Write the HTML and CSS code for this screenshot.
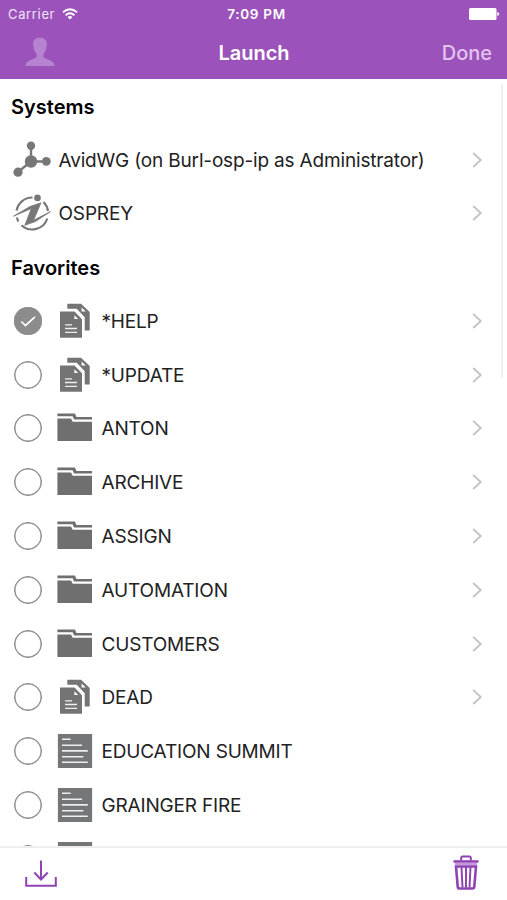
FILE: index.html
```
<!DOCTYPE html>
<html lang="en">
<head>
<meta charset="utf-8">
<title>Launch</title>
<link rel="stylesheet" href="styles.css">
</head>
<body>
<svg class="sprite" aria-hidden="true">
  <symbol id="chevron" viewBox="0 0 12 18"><path d="M1.200 2 8.800 9l-7.600 7" fill="none" stroke="#c3c3c6" stroke-width="1.800"/></symbol>
  <symbol id="docs" viewBox="0 0 36 36">
    <path fill="#747474" d="M10.300.7H24l8.700 8.300v18.400h-5V14.300L19.700 5.700h-9.400z"/>
    <path fill="#747474" d="M3 8.400h14.500L25 16.300v18.500H3z"/>
    <path fill="#fff" d="M24.600 4.400v4h4.200zM17.400 12.300v3.700h3.800z"/>
    <path stroke="#eee" stroke-width="1.300" d="M8 21.900h7M8 25.500h12M8 29.400h12"/>
  </symbol>
  <symbol id="folder" viewBox="0 0 36 36">
    <path fill="#6f6f6f" d="M.4 3.500H18l1.400 3.600H35v2.500H17l-1.400-3.300H.4zM.4 8.500H14l1.700 3.300H35v19.200H.4z"/>
  </symbol>
  <symbol id="note" viewBox="0 0 36 36">
    <path fill="#747678" d="M.9.900h34.200v34.200H.9z"/>
    <path stroke="#eee" stroke-width="1.600" d="M5 6.300h8.700M5 12.200h20M5 17.900h25.800M5 23.700h21.400M5 29.300h25.800"/>
  </symbol>
</svg>
<div class="app">
  <header class="top">
    <div class="status">
      <span class="carrier">Carrier</span>
      <svg class="wifi" viewBox="0 0 16 12"><path d="M1 4.300Q8-1.800 15 4.300M3.600 7.200Q8 3.400 12.400 7.200" fill="none" stroke="#fff" stroke-width="1.800"/><path d="M5.500 9Q8 7 10.500 9L8 11.600z" fill="#fff"/></svg>
      <span class="clock">7:09 PM</span>
      <svg class="battery" viewBox="0 0 31 12"><rect width="27.500" height="12" rx="1.500" fill="#fff"/><path d="M28.300 4q2 .5 2 2t-2 2z" fill="#fff"/></svg>
    </div>
    <nav class="bar">
      <svg class="person" viewBox="0 0 30 30"><path fill="#b783d0" d="M15 .8c4.500 0 7 2.500 6.900 6.500-.1 4-1.300 7-3.500 9.300v3.200c1.200 3.200 11.200 2.500 11.200 9.200H.4c0-6.700 10-6 11.200-9.200v-3.200C9.400 14.300 8.200 11.300 8.100 7.300 8 3.300 10.500.8 15 .8z"/></svg>
      <h1 class="title">Launch</h1>
      <span class="done">Done</span>
    </nav>
  </header>
  <main class="list">
    <h2 class="section">Systems</h2>
    <div class="row system">
      <svg class="sys" viewBox="0 0 38 38"><path d="M18 5v15.500H34M18 20.500 5 31" fill="none" stroke="#777" stroke-width="2.400"/><g fill="#777"><circle cx="18" cy="20.500" r="6.200"/><circle cx="18" cy="4.800" r="4.200"/><circle cx="33.300" cy="20.300" r="4.400"/><circle cx="5" cy="31.200" r="4.600"/></g></svg>
      <span class="label">AvidWG (on Burl-osp-ip as Administrator)</span>
      <svg class="chev"><use href="#chevron"/></svg>
    </div>
    <div class="row system">
      <svg class="sys" viewBox="0 0 38 38"><path d="M3.600 16.500A15.800 15.800 0 0 1 19.500 3.500M30.500 8A15.800 15.800 0 0 1 35 17M34.300 24.500A15.800 15.800 0 0 1 8.500 31.200M3.900 23.500q.5 2 1.500 4" fill="none" stroke="#777" stroke-width="2.200"/><path d="M.5 22.200 17 12.500 28 8.800 20.600 26.200 37.500 17.600 22.500 27.500 11.800 31.300 18.300 14.600z" fill="#777" stroke="#777" stroke-width=".8" stroke-linejoin="round"/><circle cx="24.500" cy="3.900" r="3.300" fill="#777"/></svg>
      <span class="label">OSPREY</span>
      <svg class="chev"><use href="#chevron"/></svg>
    </div>
    <h2 class="section">Favorites</h2>
    <div class="row"><span class="check on"><svg viewBox="0 0 28 28"><path d="m7.300 14.500 4.200 4 9.500-8.700" fill="none" stroke="#fff" stroke-width="1.700"/></svg></span><svg class="ico"><use href="#docs"/></svg><span class="label">*HELP</span><svg class="chev"><use href="#chevron"/></svg></div>
    <div class="row"><span class="check"></span><svg class="ico"><use href="#docs"/></svg><span class="label">*UPDATE</span><svg class="chev"><use href="#chevron"/></svg></div>
    <div class="row"><span class="check"></span><svg class="ico"><use href="#folder"/></svg><span class="label">ANTON</span><svg class="chev"><use href="#chevron"/></svg></div>
    <div class="row"><span class="check"></span><svg class="ico"><use href="#folder"/></svg><span class="label">ARCHIVE</span><svg class="chev"><use href="#chevron"/></svg></div>
    <div class="row"><span class="check"></span><svg class="ico"><use href="#folder"/></svg><span class="label">ASSIGN</span><svg class="chev"><use href="#chevron"/></svg></div>
    <div class="row"><span class="check"></span><svg class="ico"><use href="#folder"/></svg><span class="label">AUTOMATION</span><svg class="chev"><use href="#chevron"/></svg></div>
    <div class="row"><span class="check"></span><svg class="ico"><use href="#folder"/></svg><span class="label">CUSTOMERS</span><svg class="chev"><use href="#chevron"/></svg></div>
    <div class="row"><span class="check"></span><svg class="ico"><use href="#docs"/></svg><span class="label">DEAD</span><svg class="chev"><use href="#chevron"/></svg></div>
    <div class="row"><span class="check"></span><svg class="ico"><use href="#note"/></svg><span class="label">EDUCATION SUMMIT</span></div>
    <div class="row"><span class="check"></span><svg class="ico"><use href="#note"/></svg><span class="label">GRAINGER FIRE</span></div>
    <div class="row"><span class="check"></span><svg class="ico"><use href="#note"/></svg></div>
    <div class="scroll"></div>
  </main>
  <footer class="tools">
    <svg class="download" viewBox="0 0 32 28"><path d="M1.200 17v8.700h29.600V17M16 .5v19M9.300 12.500l6.700 7 6.700-7" fill="none" stroke="#9044b4" stroke-width="2"/></svg>
    <svg class="trash" viewBox="0 0 26 36"><path d="M8.200 5.500V3q0-1.500 1.500-1.500h6.600q1.500 0 1.500 1.500v2.500" fill="none" stroke="#9044b4" stroke-width="2"/><path d="M.5 5.200h25v2.600H.5z" fill="#9044b4"/><path d="M2 7.800h22v2.500H2z" fill="#c69ad9"/><path d="M3 11.500h20l-1.700 20q-.2 2-2 2H6.700q-1.800 0-2-2z" fill="none" stroke="#9044b4" stroke-width="2.600"/><path d="m8.500 12 1 20.500M13 12v20.500M17.500 12l-1 20.500" stroke="#9044b4" stroke-width="2"/></svg>
  </footer>
</div>
</body>
</html>
```
FILE: styles.css
```
* { box-sizing: border-box; }
body { margin: 0; background: #fff; font-family: Inter, "Liberation Sans", sans-serif; }
.sprite { display: none; }
.app { display: flex; flex-direction: column; width: 507px; height: 900px; overflow: hidden; }
.top { height: 79px; flex: none; background: #9b53bb; color: #fff; }
.status { height: 27px; display: grid; grid-template-columns: 54px 1fr auto 1fr 54px; align-items: center; padding: 0 8px; font-size: 13px; }
.carrier { letter-spacing: .65px; color: #f1e4f6; }
.wifi { width: 16px; height: 12px; }
.clock { margin-left: 6px; font-size: 13.500px; font-weight: 600; letter-spacing: .7px; }
.battery { width: 31px; height: 12px; grid-column: 5; justify-self: end; margin-right: -1px; }
.bar { height: 51px; display: grid; grid-template-columns: 1fr auto 1fr; align-items: center; padding: 0 15px 0 25px; }
.person { width: 30px; height: 30px; margin-top: -2px; }
.title { margin: 0 0 0 -9px; font-size: 20px; line-height: 24px; font-weight: 600; }
.done { justify-self: end; font-size: 20px; line-height: 24px; font-weight: 500; color: #e2c4ee; }
.list { flex: none; position: relative; height: 767px; overflow: hidden; }
.section, .row { height: 53.770px; display: flex; align-items: center; }
.section { margin: 0; padding: 2px 0 0 11px; font-size: 20px; line-height: 24px; font-weight: 600; color: #000; }
.row { padding: 0 23px 0 14px; color: #222; }
.label { margin: 2px 0 0 -.5px; font-size: 19px; line-height: 24px; letter-spacing: -.17px; white-space: nowrap; }
.system { padding-left: 13px; }
.sys { width: 38px; height: 38px; margin-right: 8px; flex: none; }
.check { width: 28px; height: 28px; border: 1.500px solid #838383; border-radius: 50%; box-shadow: inset 0 0 0 .5px #8f8f8f; margin-right: 15px; flex: none; }
.check.on { border: 0; background: #8c8c8c; }
.check svg { display: block; width: 28px; height: 28px; }
.ico { width: 36px; height: 36px; margin-right: 9px; flex: none; }
.chev { width: 12px; height: 18px; margin-left: auto; flex: none; }
.scroll { position: absolute; top: 5px; right: 4px; width: 2px; height: 294px; background: #f0eff0; }
.tools { flex: 1; display: flex; justify-content: space-between; align-items: center; padding: 0 28px 0 25px; border-top: 2px solid #eeedef; background: #fff; }
.download { width: 32px; height: 28px; }
.trash { width: 26px; height: 36px; margin-top: -2px; }
```
